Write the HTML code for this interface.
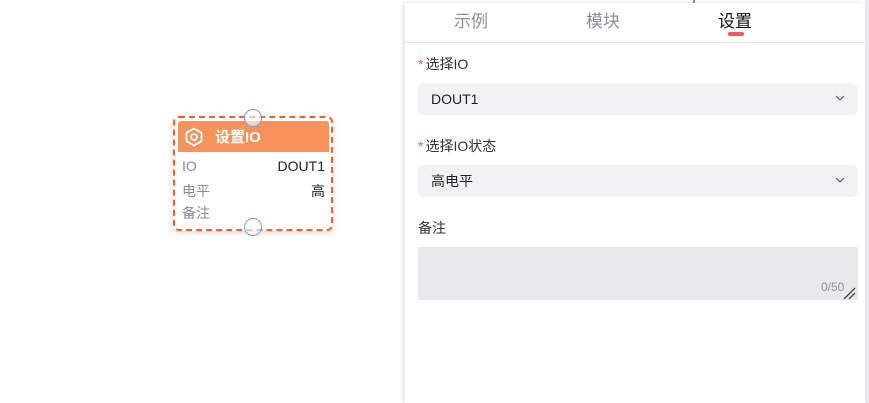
<!DOCTYPE html>
<html><head><meta charset="utf-8"><style>
body{margin:0;width:869px;height:403px;background:#fff;position:relative;overflow:hidden;font-family:"Liberation Sans","Noto Sans CJK SC",sans-serif;}
.abs{position:absolute}
.node{left:173px;top:116px;width:156px;height:111px;border:2px dashed #f0602a;border-radius:6px;box-shadow:0 2px 6px rgba(0,0,0,.15)}
.hdr{left:178px;top:121px;width:151px;height:31px;background:#f7925a;border-radius:3px 3px 0 0;color:#fff;font-size:15px;font-weight:bold}
.row{left:182px;width:143px;font-size:14px;color:#888d96}
.row span{float:right;color:#222}
.circ{width:16px;height:16px;border:1.5px solid #6f9cf2;border-radius:50%;background:rgba(255,255,255,.6)}
.panel{left:405px;top:3px;width:460px;height:400px;background:#fff;box-shadow:-2px 0 4px rgba(0,0,0,.12)}
.tab{top:7px;font-size:17px;color:#8a8f99}
.lbl{left:418px;font-size:13px;color:#333}
.lbl b{color:#f25a5a;font-weight:normal;margin-right:2px}
.sel{left:418px;width:440px;height:32px;background:#f1f2f4;border-radius:6px;font-size:14px;color:#222;line-height:32px;text-indent:13px}
.sel svg{position:absolute;right:13px;top:12px}
</style></head><body>
<div class="abs" style="left:693px;top:0;width:2px;height:3px;background:#888"></div>
<div class="abs" style="left:865px;top:0;width:4px;height:403px;background:#e8e9ec"></div>
<div class="abs node"></div>
<div class="abs hdr">
<svg class="abs" style="left:6px;top:6px" width="20" height="20" viewBox="0 0 20 20"><path d="M10 1.5L17.5 5.8V14.2L10 18.5L2.5 14.2V5.8Z" fill="none" stroke="#fff" stroke-width="1.8"/><circle cx="10" cy="10" r="3" fill="none" stroke="#fff" stroke-width="1.8"/></svg>
<div class="abs" style="left:37px;top:5px">设置IO</div></div>
<div class="abs row" style="top:158px">IO<span>DOUT1</span></div>
<div class="abs row" style="top:181px">电平<span>高</span></div>
<div class="abs row" style="top:203px">备注</div>
<div class="abs circ" style="left:244px;top:109px"></div>
<div class="abs circ" style="left:244px;top:218px"></div>
<div class="abs panel"></div>
<div class="abs tab" style="left:454px">示例</div>
<div class="abs tab" style="left:586px">模块</div>
<div class="abs tab" style="left:718px;color:#111">设置</div>
<div class="abs" style="left:728px;top:32px;width:16px;height:4px;border-radius:2px;background:#f25a5a"></div>
<div class="abs" style="left:405px;top:42px;width:460px;height:1px;background:#e3e4e7"></div>
<div class="abs lbl" style="top:54px;font-size:14px"><b>*</b>选择IO</div>
<div class="abs sel" style="top:83px">DOUT1<svg width="10" height="6" viewBox="0 0 10 6"><path d="M1 1L5 5L9 1" fill="none" stroke="#666" stroke-width="1.2"/></svg></div>
<div class="abs lbl" style="top:136px;font-size:14px"><b>*</b>选择IO状态</div>
<div class="abs sel" style="top:165px">高电平<svg width="10" height="6" viewBox="0 0 10 6"><path d="M1 1L5 5L9 1" fill="none" stroke="#666" stroke-width="1.2"/></svg></div>
<div class="abs lbl" style="top:218px;font-size:14px">备注</div>
<div class="abs" style="left:418px;top:247px;width:440px;height:53px;background:#e8e9ec;border-radius:2px"></div>
<div class="abs" style="left:821px;top:280px;font-size:12px;color:#8a8f99">0/50</div>
<svg class="abs" style="left:843px;top:287px" width="13" height="13" viewBox="0 0 13 13"><path d="M1 12L12 1M6 12L12 6" stroke="#444" stroke-width="1.3"/></svg>
</body></html>
